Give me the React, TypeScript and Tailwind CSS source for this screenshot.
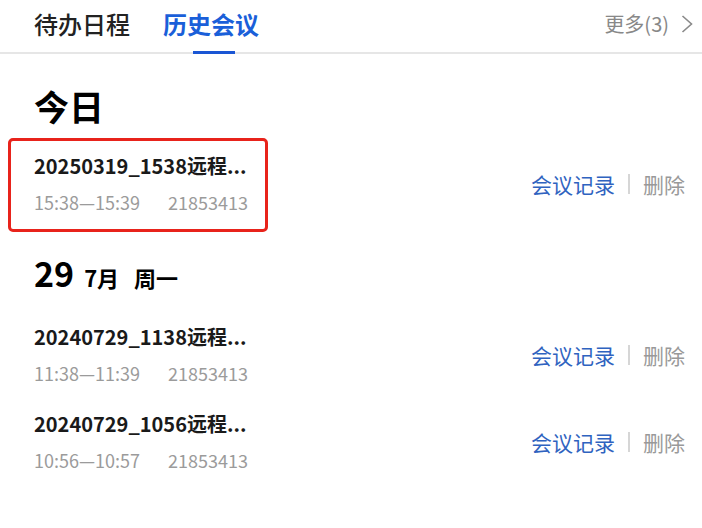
import React from "react";

type Meeting = {
  title: string;
  time: string;
  code: string;
  highlight?: boolean;
};

const font = "font-['Noto_Sans_CJK_SC','Noto_Sans',sans-serif]";

function MeetingRow({ m }: { m: Meeting }) {
  return (
    <div className="relative flex items-center justify-between pl-[34px] pr-[17px] pt-[12px] pb-[13px]">
      {m.highlight && (
        <div className="absolute left-[8px] top-[-2px] bottom-[-5px] w-[260px] rounded-[5px] border-[3px] border-[#e8231b]" />
      )}
      <div className="flex flex-col">
        <div className="text-[20px] leading-[28px] font-bold text-[#1a1a1a] whitespace-nowrap">
          {m.title}
        </div>
        <div className="mt-[10px] flex text-[18px] leading-[24px] text-[#9b9b9b] whitespace-nowrap">
          <span className="w-[134px]">{m.time}</span>
          <span>{m.code}</span>
        </div>
      </div>
      <div className="flex items-center pt-[2px] text-[21px] leading-[28px]">
        <span className="text-[#2f63c0]">会议记录</span>
        <span className="mx-[13px] h-[20px] w-[2px] bg-[#d6d6d6]" />
        <span className="text-[#999999]">删除</span>
      </div>
    </div>
  );
}

export default function App() {
  const today: Meeting[] = [
    {
      title: "20250319_1538远程...",
      time: "15:38—15:39",
      code: "21853413",
      highlight: true,
    },
  ];
  const july: Meeting[] = [
    { title: "20240729_1138远程...", time: "11:38—11:39", code: "21853413" },
    { title: "20240729_1056远程...", time: "10:56—10:57", code: "21853413" },
  ];

  return (
    <div className={`w-[702px] h-[528px] overflow-hidden bg-white ${font}`}>
      {/* Tab bar */}
      <div className="flex h-[54px] items-stretch justify-between border-b-2 border-[#e6e6e6] pb-[4px] pl-[34px] pr-[9px]">
        <div className="flex gap-[33px]">
          <div className="flex items-center text-[24px] font-medium text-[#222222]">
            待办日程
          </div>
          <div className="relative flex items-center text-[24px] font-bold text-[#1a5fd9]">
            历史会议
            <span className="absolute bottom-[-6px] left-[30px] h-[3px] w-[42px] bg-[#1a56d4]" />
          </div>
        </div>
        <div className="flex items-center gap-[12px] text-[20px] text-[#888888]">
          <span>更多(3)</span>
          <svg width="12" height="18" viewBox="0 0 12 18" fill="none">
            <polyline
              points="1.5,1 10.5,9 1.5,17"
              stroke="#8a8a8a"
              strokeWidth="1.6"
              strokeLinejoin="miter"
            />
          </svg>
        </div>
      </div>

      {/* Today */}
      <div className="pt-[32px]">
        <div className="pl-[34px] text-[35px] leading-[40px] font-bold text-black">
          今日
        </div>
        <div className="mt-[14px]">
          {today.map((m, i) => (
            <MeetingRow key={i} m={m} />
          ))}
        </div>
      </div>

      {/* 29 July */}
      <div className="mt-[26px]">
        <div className="flex items-baseline pl-[34px] font-bold text-black leading-[40px]">
          <span className="text-[34px]">29</span>
          <span className="ml-[10px] text-[22px]">7月</span>
          <span className="ml-[15px] text-[22px]">周一</span>
        </div>
        <div className="mt-[14px]">
          {july.map((m, i) => (
            <MeetingRow key={i} m={m} />
          ))}
        </div>
      </div>
    </div>
  );
}
